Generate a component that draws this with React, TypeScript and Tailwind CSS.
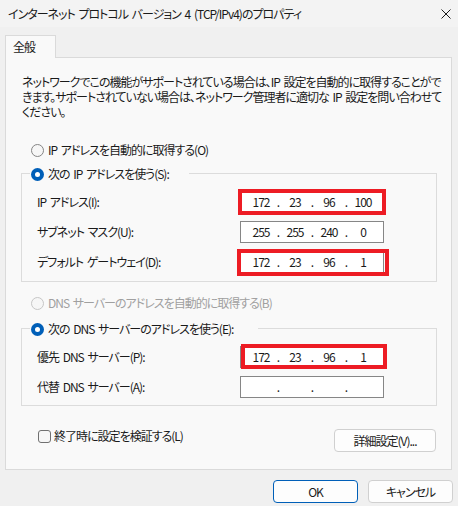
import React, { Fragment } from "react";

// Windows の IPv4 プロパティ ダイアログ
const font =
  "font-['Noto_Sans_CJK_JP','Noto_Sans',sans-serif] [font-feature-settings:'palt'] tracking-[-1px] [word-spacing:2px]";

const Radio = ({ checked, disabled }: { checked?: boolean; disabled?: boolean }) => {
  if (checked) {
    return (
      <span className="w-[13px] h-[13px] rounded-full bg-[#005fb8] flex items-center justify-center shrink-0">
        <span className="w-[5px] h-[5px] rounded-full bg-white" />
      </span>
    );
  }
  return (
    <span
      className={`w-[13px] h-[13px] rounded-full border shrink-0 bg-[#f6f6f6] ${
        disabled ? "border-[#c6c6c6]" : "border-[#858585]"
      }`}
    />
  );
};

const IpField = ({ value, mark }: { value: string[]; mark?: string }) => (
  <div className="relative w-[144px] h-[22px] bg-white border border-[#868686] flex items-center pl-[7px]">
    {value.map((v, i) => (
      <Fragment key={i}>
        {i > 0 && <span className="w-[8px] text-center">.</span>}
        <span className="w-[26px] text-center">{v}</span>
      </Fragment>
    ))}
    {mark && <div className={`absolute border-[4px] border-[#ed1c24] ${mark}`} />}
  </div>
);

const Row = ({ label, children }: { label: string; children: React.ReactNode }) => (
  <div className="h-[30px] flex items-center pl-[15px]">
    <span className="w-[203px]">{label}</span>
    {children}
  </div>
);

export default function App() {
  return (
    <div className={`w-[458px] h-[506px] bg-[#f0f0f0] text-[12px] leading-[16px] text-[#1a1a1a] flex flex-col overflow-hidden ${font}`}>
      {/* title bar */}
      <div className="h-[27px] shrink-0 bg-[#f3f3f3] flex items-center justify-between pl-[8px] pr-[7px]">
        <span>インターネット プロトコル バージョン 4 (TCP/IPv4)のプロパティ</span>
        <svg width="10" height="10" viewBox="0 0 10 10" fill="none" stroke="#1a1a1a" strokeWidth="1">
          <path d="M0.5 0.5L9.5 9.5M9.5 0.5L0.5 9.5" />
        </svg>
      </div>

      {/* tab */}
      <div className="mt-[8px] ml-[5px] relative z-10 -mb-[1px] w-[51px] h-[23px] border border-b-0 border-[#dadada] bg-[#f9f9f9] pl-[7px] flex items-center">
        全般
      </div>

      {/* panel */}
      <div className="ml-[5px] w-[447px] h-[413px] shrink-0 border border-[#dadada] bg-[#f9f9f9] flex flex-col">
        <p className="mt-[16px] ml-[16px] leading-[15px] whitespace-nowrap">
          ネットワークでこの機能がサポートされている場合は、IP 設定を自動的に取得することがで
          <br />
          きます。サポートされていない場合は、ネットワーク管理者に適切な IP 設定を問い合わせて
          <br />
          ください。
        </p>

        <div className="mt-[23px] ml-[25px] h-[16px] flex items-center gap-[4px]">
          <Radio />
          <span>IP アドレスを自動的に取得する(O)</span>
        </div>

        <div className="mt-[15px] ml-[15px] w-[416px] border border-[#dcdcdc] pb-[4px]">
          <div className="-mt-[9px] ml-[8px] w-[159px] h-[18px] bg-[#f9f9f9] flex items-center gap-[4px] pl-[1px]">
            <Radio checked />
            <span>次の IP アドレスを使う(S):</span>
          </div>
          <div className="mt-[4px]">
            <Row label="IP アドレス(I):">
              <IpField value={["172", "23", "96", "100"]} mark="-inset-[3px]" />
            </Row>
            <Row label="サブネット マスク(U):">
              <IpField value={["255", "255", "240", "0"]} />
            </Row>
            <Row label="デフォルト ゲートウェイ(D):">
              <IpField
                value={["172", "23", "96", "1"]}
                mark="-left-[4px] -right-[6px] -top-[3px] -bottom-[4px]"
              />
            </Row>
          </div>
        </div>

        <div className="mt-[13px] ml-[25px] h-[16px] flex items-center gap-[4px] text-[#a0a0a0]">
          <Radio disabled />
          <span>DNS サーバーのアドレスを自動的に取得する(B)</span>
        </div>

        <div className="mt-[17px] ml-[15px] w-[416px] border border-[#dcdcdc] pb-[3px]">
          <div className="-mt-[9px] ml-[8px] w-[228px] h-[18px] bg-[#f9f9f9] flex items-center gap-[4px] pl-[1px]">
            <Radio checked />
            <span>次の DNS サーバーのアドレスを使う(E):</span>
          </div>
          <div className="mt-[4px]">
            <Row label="優先 DNS サーバー(P):">
              <IpField
                value={["172", "23", "96", "1"]}
                mark="left-0 -right-[4px] -top-[3px] -bottom-[2px]"
              />
            </Row>
            <Row label="代替 DNS サーバー(A):">
              <IpField value={["", "", "", ""]} />
            </Row>
          </div>
        </div>

        <div className="mt-[23px] ml-[15px] w-[416px] flex items-start justify-between">
          <div className="ml-[17px] h-[14px] flex items-center gap-[3px]">
            <span className="w-[13px] h-[13px] rounded-[3px] border border-[#707070] bg-[#f6f6f6] shrink-0" />
            <span>終了時に設定を検証する(L)</span>
          </div>
          <button className="mr-[1px] w-[102px] h-[23px] rounded-[4px] border border-[#d0d0d0] bg-[#fdfdfd] flex items-center justify-center">
            詳細設定(V)...
          </button>
        </div>
      </div>

      {/* footer */}
      <div className="mt-[10px] flex justify-end gap-[10px] pr-[5px]">
        <button className="w-[85px] h-[23px] rounded-[4px] border border-[#005fb8] bg-[#fdfdfd] flex items-center justify-center">
          OK
        </button>
        <button className="w-[85px] h-[23px] rounded-[4px] border border-[#d0d0d0] bg-[#fdfdfd] flex items-center justify-center">
          キャンセル
        </button>
      </div>
    </div>
  );
}
